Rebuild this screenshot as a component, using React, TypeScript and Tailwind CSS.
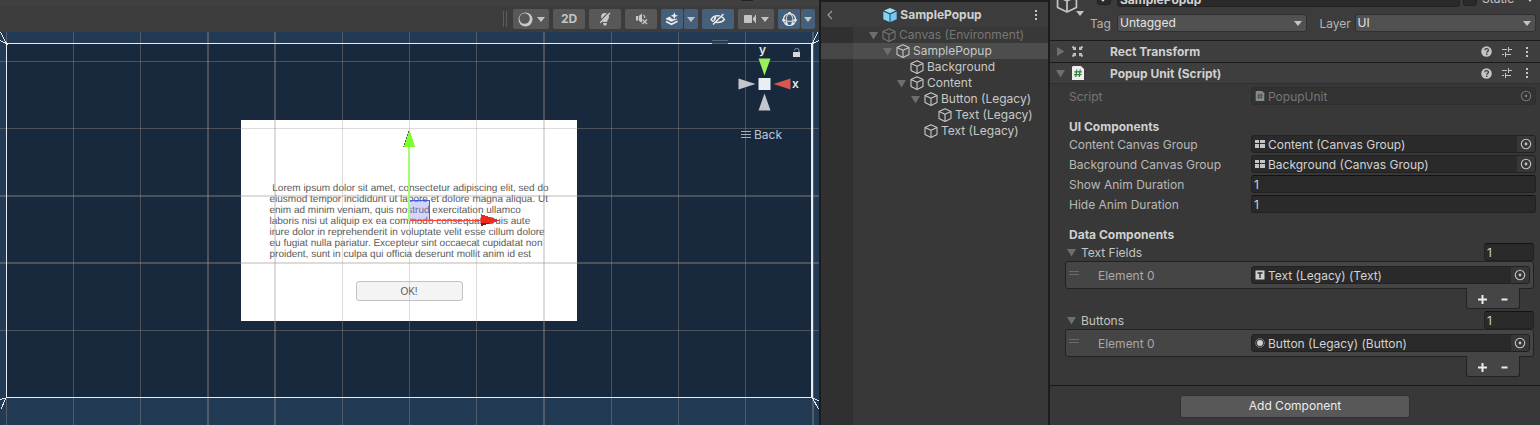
import React, { useId } from 'react';

const GRID_THIN_X = [6, 73, 140, 342, 409, 476, 611, 678, 745];
const GRID_THICK_X = [207, 274, 543, 812];
const GRID_THIN_Y = [29, 96, 298];
const GRID_THICK_Y = [163, 230];

function Caret({ className = '' }: { className?: string }) {
  return (
    <svg aria-hidden="true" width="8" height="5" viewBox="0 0 8 5" className={`pointer-events-none shrink-0 ${className}`}>
      <path d="M0 0h8L4 5z" fill="currentColor" />
    </svg>
  );
}

function Foldout({ open = true }: { open?: boolean }) {
  return (
    <svg aria-hidden="true" width="9" height="9" viewBox="0 0 9 9" className="shrink-0">
      <path d={open ? 'M0 1h9L4.500 8.500z' : 'M1 0v9L8.500 4.500z'} fill="#6e6e6e" />
    </svg>
  );
}

function Cube({ className = '', size = 14 }: { className?: string; size?: number }) {
  return (
    <svg aria-hidden="true" width={size} height={size} viewBox="0 0 14 14" fill="none" stroke="currentColor" strokeWidth="1.1" strokeLinejoin="round" className={`shrink-0 ${className}`}>
      <path d="M7 0.700 13 3.500v7L7 13.400 1 10.500v-7z" />
      <path d="M1 3.500 7 6.300l6-2.800M7 6.300v7" />
    </svg>
  );
}

function PrefabCube() {
  return (
    <svg aria-hidden="true" width="14" height="14" viewBox="0 0 14 14" className="shrink-0">
      <path d="M7 0 13 2.500 7 5.200 1 2.500z" fill="#9ee0ff" />
      <path d="M0.300 3.400 6.500 6.200V14L0.300 11.200z" fill="#7fd6fd" />
      <path d="M13.700 3.400 7.500 6.200V14l6.200-2.800z" fill="#6fcaf5" />
    </svg>
  );
}

function Kebab() {
  return (
    <svg aria-hidden="true" width="4" height="12" viewBox="0 0 4 12" fill="#c4c4c4" className="block">
      <rect x="1" y="1" width="2" height="2" />
      <rect x="1" y="5" width="2" height="2" />
      <rect x="1" y="9" width="2" height="2" />
    </svg>
  );
}

function ToolButton({ label, active = false, width, children }: { label: string; active?: boolean; width: string; children: React.ReactNode }) {
  return (
    <button
      type="button"
      aria-label={label}
      className={`flex h-5 items-center justify-center gap-1 rounded-xs ${width} ${active ? 'bg-[#46607c] text-[#ececec]' : 'bg-[#585858] text-[#c4c4c4]'}`}
    >
      {children}
    </button>
  );
}

function Toolbar() {
  return (
    <div className="bg-[#3c3c3c]">
      <div className="flex h-[6px] justify-end bg-[#404040] pr-[66px]">
        <span className="h-px w-3 bg-[#222]" />
      </div>
      <div className="flex h-[26px] items-center justify-end gap-1 pr-1">
        <div className="mr-[2px] h-4 w-1 border-x border-[#5c5c5c]" />
        <ToolButton label="Draw mode" width="w-9">
          <svg width="15" height="15" viewBox="0 0 15 15">
            <circle cx="7.500" cy="7.500" r="7" fill="#c9c9c9" />
            <circle cx="6.600" cy="6.500" r="5.200" fill="#585858" />
          </svg>
          <Caret />
        </ToolButton>
        <ToolButton label="2D view" width="w-8">
          <span className="text-xs font-bold">2D</span>
        </ToolButton>
        <ToolButton label="Scene lighting" width="w-8">
          <svg width="12" height="14" viewBox="0 0 12 14">
            <path d="M6 1a4 4 0 0 1 4 4c0 2-1.500 2.500-2 5H4C3.500 7.500 2 7 2 5a4 4 0 0 1 4-4zM4.200 11h3.600v1L7 13.500H5L4.200 12z" fill="#c9c9c9" />
            <path d="M0.500 9.500 10 0" stroke="#585858" strokeWidth="1.200" />
            <path d="M1.200 10.800 11 1" stroke="#c9c9c9" strokeWidth="1.500" />
          </svg>
        </ToolButton>
        <ToolButton label="Scene audio" width="w-8">
          <svg width="13" height="12" viewBox="0 0 13 12" fill="none" stroke="#c9c9c9">
            <path d="M1 3h2v4.500H1zM3.700 3 7 0.500v9.500L3.700 7.500z" fill="#c9c9c9" stroke="none" />
            <path d="M8.500 2c1 .8 1.400 2 1.200 3M7.500 6.500l4.500 4.500M12 6.500 7.500 11" strokeWidth="1.300" />
          </svg>
        </ToolButton>
        <div className="flex gap-px">
          <ToolButton label="Effects" active width="w-[22px]">
            <svg width="14" height="14" viewBox="0 0 14 14">
              <path d="M1 6.300l4-1.800 1.500 2L9 7.200l3-.7.5.5L6.500 9.800 1 7.300z" fill="#ececec" />
              <path d="M1 9.500 6.500 12.200l6-3" fill="none" stroke="#ececec" strokeWidth="1.700" />
              <path d="M9.300 0.300l1 2.500 2.700 1-2.700 1-1 2.400-1-2.400-2.600-1 2.600-1z" fill="#ececec" />
            </svg>
          </ToolButton>
          <ToolButton label="Effects options" active width="w-[14px]">
            <Caret className="text-[#c4c4c4]" />
          </ToolButton>
        </div>
        <ToolButton label="Scene visibility" active width="w-8">
          <svg width="16" height="12" viewBox="0 0 16 12" fill="none" stroke="#ececec">
            <path d="M1 6.500C4 1.500 11 1.500 14.500 6.500 11 10.500 4.500 10.500 1 6.500z" strokeWidth="1.300" />
            <path d="M6 4a3 3 0 0 0 0 5" strokeWidth="2" />
            <path d="M2.200 11 13 1" stroke="#46607c" strokeWidth="1.500" />
            <path d="M3 11.500 13.500 1" strokeWidth="1.500" />
          </svg>
        </ToolButton>
        <ToolButton label="Scene camera" width="w-9">
          <svg width="13" height="10" viewBox="0 0 13 10" fill="#c4c4c4">
            <rect x="0" y="1" width="8" height="8" rx="1" />
            <path d="M9 4l2-2v6L9 6zM11 1h1v8h-1z" />
          </svg>
          <Caret />
        </ToolButton>
        <div className="flex gap-px">
          <ToolButton label="Gizmos" active width="w-[22px]">
            <svg width="15" height="15" viewBox="0 0 15 15" fill="none" stroke="#ececec">
              <circle cx="7.500" cy="7.500" r="6" strokeWidth="1.200" />
              <path d="M7.500 1c-3.500 3-3.500 6-3 10.500M7.500 1c3 2.500 4 5.500 3 10.500M1.500 8c4 1.800 8 1.800 12 0" strokeWidth="1" />
              <path d="M6.300 0h2.400v2.400H6.300zM0.300 7h2.400v2.300H.3zM12.300 7h2.400v2.300h-2.400zM3.200 10.600h2.400V13H3.200zM9.400 10.600h2.400V13H9.400z" fill="#ececec" stroke="none" />
            </svg>
          </ToolButton>
          <ToolButton label="Gizmos options" active width="w-[14px]">
            <Caret className="text-[#c4c4c4]" />
          </ToolButton>
        </div>
      </div>
    </div>
  );
}

function SceneOverlay() {
  return (
    <div className="pointer-events-none absolute inset-0 flex justify-center overflow-hidden">
      <svg aria-hidden="true" width="819" height="393" viewBox="0 0 819 393" shapeRendering="crispEdges" className="shrink-0">
        <g fill="#a59c94" fillOpacity="0.36">
          {GRID_THIN_X.map((x) => <rect key={x} x={x} y="0" width="1" height="393" />)}
          {GRID_THICK_X.map((x) => <rect key={x} x={x} y="0" width="2" height="393" />)}
          {GRID_THIN_Y.map((y) => <rect key={y} x="0" y={y} width="819" height="1" />)}
          {GRID_THICK_Y.map((y) => <rect key={y} x="0" y={y} width="819" height="2" />)}
        </g>
        <g fill="#e9ebf2">
          <rect x="6" y="11" width="807" height="1" />
          <rect x="6" y="365" width="807" height="1" />
          <rect x="6" y="11" width="1" height="355" />
          <rect x="811" y="11" width="2" height="355" />
        </g>
        <g stroke="#e4e6e8" strokeWidth="1" fill="none">
          <path d="M0.500 0 6.500 11.500 0 8.500M818 0 812.500 11.500 819 8.500M0 367.500 6 366 1 377M819 369 812.500 366 818.500 377" />
        </g>
        <g fill="#5b6269">
          <rect x="712" y="8" width="16" height="1" />
          <rect x="712" y="11" width="16" height="1" />
        </g>
        <rect x="409.500" y="168.500" width="20" height="20" fill="#8488f0" fillOpacity="0.35" stroke="#3f5fe0" />
        <rect x="408" y="112" width="2" height="77" fill="#a8fb76" />
        <path d="M409 98 403 115h3z" fill="#3d7a1c" />
        <path d="M409.500 98 415 115H404z" fill="#7dff2e" />
        <rect x="410" y="188" width="73" height="1" fill="#f4453f" />
        <path d="M481 182 500 188.500 481 194z" fill="#f0281e" />
        <path d="M481 190.500 490 191 481 194z" fill="#7d1d18" />
      </svg>
    </div>
  );
}

function OrientationGizmo() {
  return (
    <div className="absolute top-2 right-[15px] flex w-[66px] flex-col text-[#c8ccd2]">
      <svg role="img" aria-label="Orientation axes" width="66" height="76" viewBox="0 -4 66 76" className="block">
        <path d="M20.500 14.500h12l-6 17z" fill="#9bee5c" />
        <path d="M20.500 66.500h12l-6-17z" fill="#c3c6ca" />
        <path d="M0.500 34.500v11l17-5.500z" fill="#c3c6ca" />
        <path d="M52.500 34.500v11l-17-5.500z" fill="#d9574d" />
        <rect x="20.500" y="34" width="12" height="12" fill="#e9eef2" />
        <text x="21" y="10" fill="#e6e9ec" fontSize="12" fontWeight="600">y</text>
        <text x="54" y="44" fill="#e6e9ec" fontSize="12" fontWeight="600">x</text>
        <rect x="55" y="8" width="7" height="5" fill="#d4d7da" />
        <path d="M56.500 6.500a2.300 2.300 0 0 1 4.500-.5v2" fill="none" stroke="#8f979f" />
      </svg>
      <button type="button" className="mt-[9px] ml-[3px] flex h-5 items-center gap-[3px] text-xs text-[#c0c6cd]">
        <svg aria-hidden="true" width="10" height="8" viewBox="0 0 10 8" fill="#a6adb5">
          <path d="M0 0h10v1H0zM0 3h10v1H0zM0 6h10v1H0z" />
        </svg>
        Back
      </button>
    </div>
  );
}

function SceneView() {
  return (
    <section aria-label="Scene" className="flex min-w-0 flex-1 flex-col">
      <Toolbar />
      <div className="relative flex flex-1 flex-col overflow-hidden bg-[#223a54] px-[6px] pt-[11px] pb-[27px]">
        <div className="flex flex-1 items-center justify-center bg-[#18293e]">
          <div className="mr-px flex h-[201px] w-[336px] flex-col items-center bg-white font-['Liberation_Sans',Arial,sans-serif] text-[#5a5a5a]">
            <p className="mt-[63px] text-[10px] leading-[11px] whitespace-pre [text-rendering:geometricPrecision]">
              {' Lorem ipsum dolor sit amet, consectetur adipiscing elit, sed do\neiusmod tempor incididunt ut labore et dolore magna aliqua. Ut\nenim ad minim veniam, quis nostrud exercitation ullamco\nlaboris nisi ut aliquip ex ea commodo consequat. Duis aute\nirure dolor in reprehenderit in voluptate velit esse cillum dolore\neu fugiat nulla pariatur. Excepteur sint occaecat cupidatat non\nproident, sunt in culpa qui officia deserunt mollit anim id est'}
            </p>
            <button type="button" className="mt-[21px] h-5 w-[107px] rounded-[3px] border border-[#c2c2c2] bg-[#f4f4f4] pt-px text-[10px] leading-none">
              OK!
            </button>
          </div>
        </div>
        <SceneOverlay />
        <OrientationGizmo />
      </div>
    </section>
  );
}

type Node = { name: string; indent: string; open?: boolean; tone?: string; selected?: boolean };

const NODES: Node[] = [
  { name: 'Canvas (Environment)', indent: 'pl-4', open: true, tone: 'text-[#767676]' },
  { name: 'SamplePopup', indent: 'pl-[30px]', open: true, selected: true },
  { name: 'Background', indent: 'pl-11' },
  { name: 'Content', indent: 'pl-11', open: true },
  { name: 'Button (Legacy)', indent: 'pl-[58px]', open: true },
  { name: 'Text (Legacy)', indent: 'pl-[72px]' },
  { name: 'Text (Legacy)', indent: 'pl-[58px]' },
];

function Hierarchy() {
  return (
    <section aria-label="Hierarchy" className="flex w-[231px] shrink-0 flex-col border-x-2 border-[#1c1c1c] bg-[#383838]">
      <header className="flex h-[27px] items-center border-t-2 border-[#1f1f1f] bg-[#3c3c3c] px-[6px] pt-px">
        <button type="button" aria-label="Back to scene" className="flex w-4">
          <svg width="6" height="10" viewBox="0 0 6 10" fill="none" stroke="#9a9a9a" strokeWidth="1.200">
            <path d="M5 1 1 5l4 4" />
          </svg>
        </button>
        <h2 className="flex flex-1 items-center justify-center gap-[3px] pr-2 text-xs font-bold text-[#d0d0d0]">
          <PrefabCube />
          SamplePopup
        </h2>
        <button type="button" aria-label="Hierarchy menu" className="flex w-3 justify-center"><Kebab /></button>
      </header>
      <ul className="flex-1 bg-linear-to-r from-[#303030] from-[32px] to-[#383838] to-[32px]">
        {NODES.map((n, i) => (
          <li key={i} className={`flex h-4 ${n.selected ? 'bg-[#4d4d4d]' : ''}`}>
            <span className={`w-8 shrink-0 ${n.selected ? 'bg-[#464646]' : ''}`} />
            <button type="button" className={`flex min-w-0 flex-1 items-center text-xs leading-4 whitespace-nowrap ${n.indent} ${n.tone ?? 'text-[#c8c8c8]'}`}>
              <span className="flex w-[13px] shrink-0">{n.open && <Foldout />}</span>
              <Cube className="mr-[3px]" />
              {n.name}
            </button>
          </li>
        ))}
      </ul>
    </section>
  );
}

function Select({ id, value, width }: { id: string; value: string; width: string }) {
  return (
    <span className={`grid items-center ${width}`}>
      <select id={id} defaultValue={value} className="col-start-1 row-start-1 h-[18px] w-full appearance-none rounded-[3px] border border-[#303030] bg-[#515151] pl-[2px] text-xs leading-4 text-[#e4e4e4]">
        <option>{value}</option>
      </select>
      <Caret className="col-start-1 row-start-1 mr-[5px] justify-self-end text-[#c4c4c4]" />
    </span>
  );
}

function ObjectHeader() {
  return (
    <header className="flex h-10 items-end overflow-hidden bg-[#3c3c3c] pr-1 pb-2 pl-[6px]">
      <div className="flex w-[34px] shrink-0 items-end self-end pb-4">
        <Cube size={22} className="mb-[3px] text-[#c4c4c4]" />
        <Caret className="-ml-[2px] text-[#c4c4c4]" />
      </div>
      <div className="flex min-w-0 flex-1 flex-col gap-[7px]">
        <div className="flex h-[18px] items-center">
          <span className="ml-[7px] grid h-[14px] w-[14px] place-items-center">
            <input type="checkbox" aria-label="Active" defaultChecked className="col-start-1 row-start-1 h-[14px] w-[14px] appearance-none rounded-[3px] border border-[#1f1f1f] bg-[#2a2a2a]" />
            <svg aria-hidden="true" width="10" height="10" viewBox="0 0 10 10" fill="none" stroke="#e4e4e4" strokeWidth="1.800" className="pointer-events-none col-start-1 row-start-1">
              <path d="M1.500 5 4 7.500l4.500-6" />
            </svg>
          </span>
          <input aria-label="Name" defaultValue="SamplePopup" className="ml-[6px] h-[18px] min-w-0 flex-1 rounded-[3px] border border-[#222] bg-[#2a2a2a] pt-[2px] pl-[2px] text-xs font-bold text-[#d2d2d2]" />
          <label className="flex w-[76px] items-center gap-[5px] pt-[2px] pl-[3px] text-xs text-[#c4c4c4]">
            <input type="checkbox" className="h-[14px] w-[14px] appearance-none rounded-[3px] border border-[#1f1f1f] bg-[#2a2a2a]" />
            Static
            <Caret className="mr-[2px] ml-auto" />
          </label>
        </div>
        <div className="flex h-[18px] items-center text-xs text-[#b4b4b4]">
          <label htmlFor="tag" className="w-[27px] pt-px">Tag</label>
          <Select id="tag" value="Untagged" width="min-w-0 flex-[189]" />
          <label htmlFor="layer" className="w-12 pt-px pl-[13px]">Layer</label>
          <Select id="layer" value="UI" width="min-w-0 flex-[181]" />
        </div>
      </div>
    </header>
  );
}

function ComponentHeader({ title, open, icon, className }: { title: string; open: boolean; icon: React.ReactNode; className: string }) {
  return (
    <div className={`flex items-center bg-[#3e3e3e] pr-[11px] pl-[6px] ${className}`}>
      <button type="button" aria-label={`Toggle ${title}`} className="flex w-[14px]"><Foldout open={open} /></button>
      <span className="flex w-10 shrink-0 pl-px">{icon}</span>
      <h3 className="flex-1 pt-px text-xs font-bold text-[#d0d0d0]">{title}</h3>
      <div className="flex items-center">
        <button type="button" aria-label={`${title} help`}>
          <svg width="11" height="11" viewBox="0 0 11 11" className="block">
            <circle cx="5.500" cy="5.500" r="5.300" fill="#c4c4c4" />
            <path d="M3.800 4.300c0-2.200 3.600-2.200 3.600-.1 0 1.300-1.700 1.300-1.700 2.600" fill="none" stroke="#3e3e3e" strokeWidth="1.300" />
            <rect x="5" y="7.600" width="1.400" height="1.400" fill="#3e3e3e" />
          </svg>
        </button>
        <button type="button" aria-label={`${title} presets`} className="ml-[9px]">
          <svg width="12" height="12" viewBox="0 0 12 12" fill="#c4c4c4" shapeRendering="crispEdges" className="block">
            <path d="M1 3h5v1H1zM7 1h1v5H7zM8 3h3v1H8zM1 8h2v1H1zM4 6h1v5H4zM5 8h5v1H5z" />
          </svg>
        </button>
        <button type="button" aria-label={`${title} menu`} className="ml-[12px]"><Kebab /></button>
      </div>
    </div>
  );
}

function ScriptIcon({ size, paper = '#eeeeee', ink = '#2f7d32' }: { size: number; paper?: string; ink?: string }) {
  return (
    <svg aria-hidden="true" width={size} height={size} viewBox="0 0 14 14" className="shrink-0">
      <path d="M2 0h8l3 3v11H1V1z" fill={paper} />
      <path d="M5.800 3.500 4.800 11M9.200 3.500 8.200 11M3.300 5.800h7.500M3 8.700h7.500" stroke={ink} strokeWidth="1.200" fill="none" />
    </svg>
  );
}

const RectIcon = (
  <svg aria-hidden="true" width="13" height="13" viewBox="0 0 13 13" fill="#c4c4c4">
    <path d="M1.500 1.500 3.500 3.500M11.500 1.500 9.500 3.500M1.500 11.500 3.500 9.500M11.500 11.500 9.500 9.500" stroke="#c4c4c4" strokeWidth="2" />
    <path d="M5 1.500V5H1.500zM8 1.500V5h3.500zM5 11.500V8H1.500zM8 11.500V8h3.500z" />
  </svg>
);

const GroupIcon = (
  <svg aria-hidden="true" width="10" height="10" viewBox="0 0 10 10" fill="#c4c4c4" className="shrink-0">
    <path d="M0 1h4v3H0zM5 1h5v3H5zM0 5h4v4H0zM5 5h5v4H5z" />
  </svg>
);

const TextIcon = (
  <svg aria-hidden="true" width="10" height="10" viewBox="0 0 10 10" className="shrink-0">
    <rect x="0.500" y="0.500" width="9" height="9" fill="#d0d0d0" />
    <path d="M2.500 3h5M5 3v5" stroke="#2a2a2a" strokeWidth="1.400" />
  </svg>
);

const ButtonIcon = (
  <svg aria-hidden="true" width="10" height="10" viewBox="0 0 10 10" className="shrink-0">
    <circle cx="5" cy="5" r="3" fill="#d0d0d0" />
    <circle cx="5" cy="5" r="4.300" fill="none" stroke="#b0b0b0" strokeWidth="0.900" strokeDasharray="1.300 0.600" />
  </svg>
);

function ObjectField({ id, value, icon, disabled = false }: { id: string; value: string; icon: React.ReactNode; disabled?: boolean }) {
  return (
    <div className={`flex h-[18px] min-w-0 flex-1 items-center overflow-hidden rounded-[3px] border pl-[3px] ${disabled ? 'border-[#2e2e2e] bg-[#323232]' : 'border-[#222] bg-[#2a2a2a]'}`}>
      {icon}
      <input id={id} readOnly disabled={disabled} value={value} className={`ml-[3px] h-4 min-w-0 flex-1 pt-px text-xs ${disabled ? 'text-[#767676]' : 'text-[#d2d2d2]'}`} />
      <button type="button" aria-label={`Pick ${value}`} disabled={disabled} className={`flex h-4 w-[18px] items-center justify-center ${disabled ? 'text-[#767676]' : 'bg-[#373737] text-[#c4c4c4]'}`}>
        <svg width="12" height="12" viewBox="0 0 12 12">
          <circle cx="6" cy="6" r="4.700" fill="none" stroke="currentColor" strokeWidth="1.100" />
          <circle cx="6" cy="6" r="1.400" fill="currentColor" />
        </svg>
      </button>
    </div>
  );
}

const NUMBER_FIELD = 'h-[18px] min-w-0 rounded-[3px] border border-[#222] border-t-[#121212] bg-[#2a2a2a] pt-px pl-[2px] text-xs text-[#d2d2d2]';
const HEADING = 'mt-[10px] -mb-[2px] h-[18px] pt-px text-xs leading-[18px] font-bold text-[#d0d0d0]';

function Row({ label, dim = false, children }: { label: string; dim?: boolean; children: (id: string) => React.ReactNode }) {
  const id = useId();
  return (
    <div className="flex h-[18px] items-center">
      <label htmlFor={id} className={`w-[182px] shrink-0 pt-px text-xs ${dim ? 'text-[#767676]' : 'text-[#b8b8b8]'}`}>{label}</label>
      {children(id)}
    </div>
  );
}

function ListProperty({ title, value, icon }: { title: string; value: string; icon: React.ReactNode }) {
  const id = useId();
  return (
    <div className="-ml-1 pr-[2px]">
      <div className="flex h-[18px] items-center">
        <span className="flex w-4 pl-[2px]"><Foldout /></span>
        <h4 className="flex-1 pt-px text-xs text-[#c4c4c4]">{title}</h4>
        <input aria-label={`${title} size`} defaultValue="1" className={`w-[50px] ${NUMBER_FIELD}`} />
      </div>
      <div className="flex h-7 items-center rounded-[3px] border border-[#222] bg-[#454545] pr-[3px] pl-[3px]">
        <svg aria-hidden="true" width="10" height="8" viewBox="0 0 10 8" fill="#6a6a6a" className="shrink-0">
          <path d="M0 0h10v1H0zM0 3h10v1H0z" />
        </svg>
        <label htmlFor={id} className="w-[172px] shrink-0 pt-px pl-[19px] text-xs text-[#a8a8a8]">Element 0</label>
        <ObjectField id={id} value={value} icon={icon} />
      </div>
      <div className="mr-[14px] ml-auto -mt-px flex h-[21px] w-[54px] items-center justify-center gap-[13px] rounded-b-[3px] border border-t-0 border-[#222] bg-[#454545] pt-[2px]">
        <button type="button" aria-label={`Add to ${title}`}>
          <svg width="9" height="9" viewBox="0 0 9 9" fill="#ececec" className="block"><path d="M0 3.500h9v2H0zM3.500 0h2v9h-2z" /></svg>
        </button>
        <button type="button" aria-label={`Remove from ${title}`}>
          <svg width="9" height="9" viewBox="0 0 9 9" fill="#ececec" className="block"><path d="M1.500 3.500h6v2h-6z" /></svg>
        </button>
      </div>
    </div>
  );
}

function Inspector() {
  return (
    <section aria-label="Inspector" className="flex w-[490px] shrink-0 flex-col bg-[#383838]">
      <ObjectHeader />
      <ComponentHeader title="Rect Transform" open={false} icon={RectIcon} className="h-[22px] border-t border-[#1a1a1a]" />
      <ComponentHeader title="Popup Unit (Script)" open icon={<ScriptIcon size={14} />} className="h-[22px] border-y border-t-[#1a1a1a] border-b-[#303030]" />
      <div className="flex flex-col gap-[2px] border-b border-[#1a1a1a] pt-[3px] pr-1 pb-2 pl-[19px]">
        <Row label="Script" dim>
          {(id) => <ObjectField id={id} value="PopupUnit" disabled icon={<ScriptIcon size={10} paper="#8a8a8a" ink="#35543a" />} />}
        </Row>
        <h4 className={HEADING}>UI Components</h4>
        <Row label="Content Canvas Group">{(id) => <ObjectField id={id} value="Content (Canvas Group)" icon={GroupIcon} />}</Row>
        <Row label="Background Canvas Group">{(id) => <ObjectField id={id} value="Background (Canvas Group)" icon={GroupIcon} />}</Row>
        <Row label="Show Anim Duration">{(id) => <input id={id} defaultValue="1" className={`flex-1 ${NUMBER_FIELD}`} />}</Row>
        <Row label="Hide Anim Duration">{(id) => <input id={id} defaultValue="1" className={`flex-1 ${NUMBER_FIELD}`} />}</Row>
        <h4 className={HEADING}>Data Components</h4>
        <ListProperty title="Text Fields" value="Text (Legacy) (Text)" icon={TextIcon} />
        <ListProperty title="Buttons" value="Button (Legacy) (Button)" icon={ButtonIcon} />
      </div>
      <button type="button" className="mx-auto mt-[9px] h-[23px] w-[230px] rounded-[3px] border border-[#303030] bg-[#585858] pb-px text-xs text-[#ececec]">
        Add Component
      </button>
    </section>
  );
}

export default function App() {
  return (
    <main className="flex min-h-screen overflow-hidden bg-[#383838] font-[Inter,sans-serif]">
      <SceneView />
      <Hierarchy />
      <Inspector />
    </main>
  );
}
